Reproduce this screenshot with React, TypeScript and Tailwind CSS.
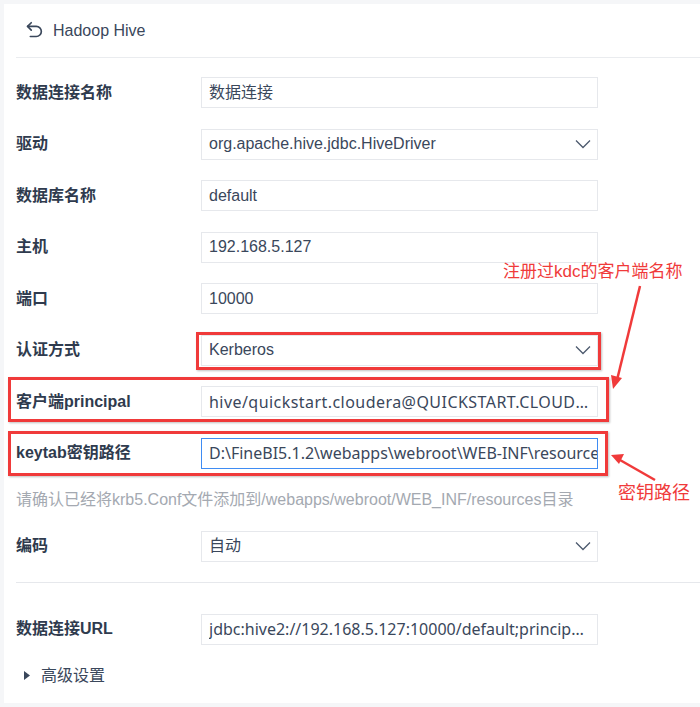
const font = { fontFamily: '"Liberation Sans", "Noto Sans CJK SC", sans-serif' };
const wide = { fontFamily: '"Noto Sans", "Noto Sans CJK SC", sans-serif' };

type Row = {
  label: string;
  value: string;
  select?: boolean;
  focus?: boolean;
  clip?: boolean;
  wideText?: boolean;
  loose?: boolean;
};

const rows: Row[] = [
  { label: "数据连接名称", value: "数据连接" },
  { label: "驱动", value: "org.apache.hive.jdbc.HiveDriver", select: true },
  { label: "数据库名称", value: "default" },
  { label: "主机", value: "192.168.5.127" },
  { label: "端口", value: "10000" },
  { label: "认证方式", value: "Kerberos", select: true },
  {
    label: "客户端principal",
    value: "hive/quickstart.cloudera@QUICKSTART.CLOUDERA",
    wideText: true,
    loose: true,
  },
  {
    label: "keytab密钥路径",
    value: "D:\\FineBI5.1.2\\webapps\\webroot\\WEB-INF\\resources\\hive.keytab",
    focus: true,
    clip: true,
    wideText: true,
  },
];

function Chevron() {
  return (
    <svg width="16" height="10" viewBox="0 0 16 10" className="shrink-0">
      <path d="M1 1.5 L8 8.5 L15 1.5" fill="none" stroke="#4d5a6e" strokeWidth="1.3" />
    </svg>
  );
}

function Field({ label, value, select, focus, clip, wideText, loose }: Row) {
  return (
    <div className="flex items-center h-[31px]">
      <div className="w-[185px] shrink-0 text-[16px] font-bold text-[#2f3b4e]">{label}</div>
      <div
        className={
          "w-[397px] h-[31px] flex items-center pl-[7px] border bg-white " +
          (focus ? "border-[#3f8cf3]" : "border-[#e6e8ec]") +
          (select ? " pr-[6px]" : clip ? "" : " pr-[7px]")
        }
      >
        <div
          style={wideText ? wide : undefined}
          className={
            "flex-1 min-w-0 overflow-hidden whitespace-nowrap text-[16px] text-[#3a475b] " +
            (clip ? "" : "text-ellipsis ") +
            (loose ? "tracking-[0.45px]" : "")
          }
        >
          {value}
        </div>
        {select && <Chevron />}
      </div>
    </div>
  );
}

export default function App() {
  return (
    <div style={font} className="relative h-[707px] bg-[#f5f6f8] pt-[4px] pl-[4px] overflow-hidden">
      <div className="h-[699px] bg-white">
        <div className="h-[53px] flex items-center pl-[19px] gap-[8px] text-[#3a475b]">
          <svg width="22" height="22" viewBox="0 0 24 24" fill="none" stroke="currentColor" strokeWidth="1.8" strokeLinecap="round" strokeLinejoin="round">
            <path d="M9 3 5 7l4 4" />
            <path d="M5 7h9.5a5.5 5.5 0 0 1 0 11H8" />
          </svg>
          <span className="text-[16px]">Hadoop Hive</span>
        </div>
        <div className="ml-[12px] border-t border-[#eaecef]" />

        <div className="pl-[12px] pt-[19px] flex flex-col gap-[20.5px]">
          {rows.map((r) => (
            <Field key={r.label} {...r} />
          ))}
        </div>

        <div className="pl-[12px] mt-[20px] leading-[22px] text-[16px] text-[#a4a9b1] whitespace-nowrap">
          请确认已经将krb5.Conf文件添加到/webapps/webroot/WEB_INF/resources目录
        </div>

        <div className="pl-[12px] mt-[20px]">
          <Field label="编码" value="自动" select />
        </div>

        <div className="ml-[12px] mt-[20px] border-t border-[#e6e8ec]" />

        <div className="pl-[12px] mt-[31px]">
          <Field
            label="数据连接URL"
            value="jdbc:hive2://192.168.5.127:10000/default;principal=hive/quickstart.cloudera@QUICKSTART.CLOUDERA"
            wideText
          />
        </div>

        <div className="pl-[20px] mt-[20px] flex items-center gap-[11px] leading-[22px]">
          <svg width="6" height="9" viewBox="0 0 6 9">
            <path d="M0 0 L6 4.5 L0 9 Z" fill="#3a475b" />
          </svg>
          <span className="text-[16px] text-[#3a475b]">高级设置</span>
        </div>
      </div>

      {/* annotations */}
      <div className="absolute left-[196px] top-[332px] w-[405px] h-[38px] border-[3px] border-[#f03a3a] shadow-[1px_1px_2px_rgba(0,0,0,0.25)]" />
      <div className="absolute left-[8px] top-[377px] w-[601px] h-[45px] border-[3px] border-[#f03a3a] shadow-[1px_1px_2px_rgba(0,0,0,0.25)]" />
      <div className="absolute left-[8px] top-[431px] w-[600px] h-[45px] border-[3px] border-[#f03a3a] shadow-[1px_1px_2px_rgba(0,0,0,0.25)]" />

      <div className="absolute left-[503px] top-[260px] text-[17px] leading-[24px] text-[#f03a3a] whitespace-nowrap">
        注册过kdc的客户端名称
      </div>
      <div className="absolute left-[618px] top-[481px] text-[18px] leading-[24px] text-[#f03a3a] whitespace-nowrap">
        密钥路径
      </div>

      <svg className="absolute left-0 top-0 pointer-events-none" width="700" height="707">
        <line x1="640" y1="286" x2="617" y2="380" stroke="#f03a3a" strokeWidth="2.5" />
        <path d="M613 389 L611 375 L622 378 Z" fill="#f03a3a" />
        <line x1="655" y1="480" x2="620" y2="460" stroke="#f03a3a" strokeWidth="2.5" />
        <path d="M611 455 L624 454 L619 464 Z" fill="#f03a3a" />
      </svg>
    </div>
  );
}
